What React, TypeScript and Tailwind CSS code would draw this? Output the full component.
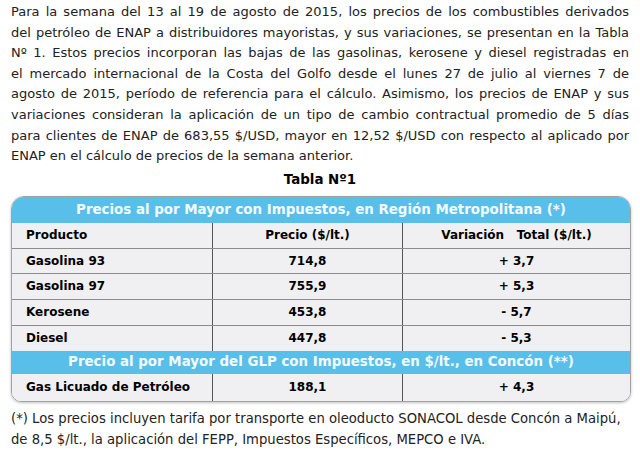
const INTRO = [
  'Para la semana del 13 al 19 de agosto de 2015, los precios de los combustibles derivados',
  'del petróleo de ENAP a distribuidores mayoristas, y sus variaciones, se presentan en la Tabla',
  'Nº 1. Estos precios incorporan las bajas de las gasolinas, kerosene y diesel registradas en',
  'el mercado internacional de la Costa del Golfo desde el lunes 27 de julio al viernes 7 de',
  'agosto de 2015, período de referencia para el cálculo. Asimismo, los precios de ENAP y sus',
  'variaciones consideran la aplicación de un tipo de cambio contractual promedio de 5 días',
  'para clientes de ENAP de 683,55 $/USD, mayor en 12,52 $/USD con respecto al aplicado por',
  'ENAP en el cálculo de precios de la semana anterior.',
]

const ROWS = [
  { name: 'Gasolina 93', price: '714,8', diff: '+ 3,7', h: 'h-[25px]' },
  { name: 'Gasolina 97', price: '755,9', diff: '+ 5,3', h: 'h-[26px]' },
  { name: 'Kerosene', price: '453,8', diff: '- 5,7', h: 'h-[26px]' },
  { name: 'Diesel', price: '447,8', diff: '- 5,3', h: 'h-[25px]' },
]

function Row({ name, price, diff, h, line }: { name: string; price: string; diff: string; h: string; line?: boolean }) {
  return (
    <div className={`grid grid-cols-[201px_190px_1fr] ${h} ${line ? 'border-b border-[#8c8c8c]' : ''} bg-[#f0f0f2] text-[12px] font-bold text-black`}>
      <div className="flex items-center border-r border-[#555] pl-[14px]">{name}</div>
      <div className="flex items-center justify-center border-r border-[#555]">{price}</div>
      <div className="flex items-center justify-center">{diff}</div>
    </div>
  )
}

export default function App() {
  return (
    <div className="h-[459px] w-[640px] overflow-hidden bg-white px-[11px] pt-[2px] text-[13px] text-[#222] [font-family:'DejaVu_Sans',Verdana,sans-serif]">
      <p className="leading-[20.6px]">
        {INTRO.map((l, i) => (
          <span key={i} className={`block ${i < INTRO.length - 1 ? 'text-justify [text-align-last:justify]' : ''}`}>
            {l}
          </span>
        ))}
      </p>
      <p className="mt-[3px] text-center text-[13.4px] font-bold leading-[20px] text-black">Tabla Nº1</p>

      <div className="mt-[6px] w-[620px] overflow-hidden rounded-t-[13px] rounded-b-[10px] border border-[#a3a3a3] text-[13.4px] shadow-[0_1px_3px_rgba(0,0,0,0.25)]">
        <div className="flex h-[26px] items-center justify-center bg-[#58bfea] font-bold text-[#f4fbff]">
          Precios al por Mayor con Impuestos, en Región Metropolitana (*)
        </div>
        <div className="grid h-[26px] grid-cols-[201px_190px_1fr] border-b border-[#8c8c8c] bg-[#f0f0f2] text-[12px] font-bold text-black">
          <div className="flex items-center border-r border-[#555] pl-[14px]">Producto</div>
          <div className="flex items-center justify-center border-r border-[#555]">Precio ($/lt.)</div>
          <div className="flex items-center justify-center whitespace-pre">Variación   Total ($/lt.)</div>
        </div>
        {ROWS.map((r, i) => (
          <Row key={r.name} {...r} line={i < ROWS.length - 1} />
        ))}
        <div className="flex h-[23px] items-center justify-center bg-[#58bfea] font-bold text-[#f4fbff]">
          Precio al por Mayor del GLP con Impuestos, en $/lt., en Concón (**)
        </div>
        <Row name="Gas Licuado de Petróleo" price="188,1" diff="+ 4,3" h="h-[27px]" />
      </div>

      <p className="mt-[6px] text-[13.2px] leading-[21px]">
        (*) Los precios incluyen tarifa por transporte en oleoducto SONACOL desde Concón a Maipú, de 8,5 $/lt., la
        aplicación del FEPP, Impuestos Específicos, MEPCO e IVA.
      </p>
    </div>
  )
}
